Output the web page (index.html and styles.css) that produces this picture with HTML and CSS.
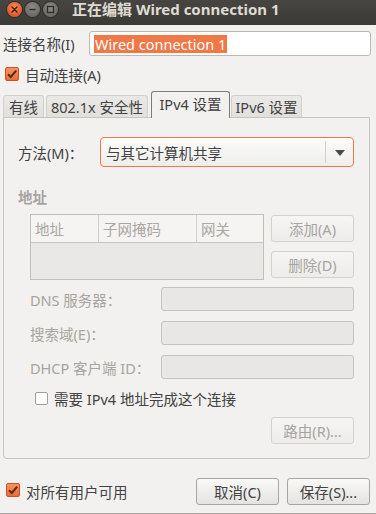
FILE: index.html
```html
<!DOCTYPE html>
<html lang="zh-CN">
<head>
<meta charset="utf-8">
<title>正在编辑 Wired connection 1</title>
<link rel="stylesheet" href="styles.css">
</head>
<body>
<div class="window">
  <div class="titlebar">
    <span class="wbtn close"><svg width="15" height="15" viewBox="0 0 15 15"><path d="M5 5 L10 10 M10 5 L5 10" stroke="#3b1a0c" stroke-width="1.4" stroke-linecap="round"/></svg></span>
    <span class="wbtn gray"><svg width="15" height="15" viewBox="0 0 15 15"><path d="M4.5 7.5 H10.5" stroke="#2e2d2a" stroke-width="1.4"/></svg></span>
    <span class="wbtn gray"><svg width="15" height="15" viewBox="0 0 15 15"><rect x="4.5" y="4.5" width="6" height="6" fill="none" stroke="#2e2d2a" stroke-width="1.3"/></svg></span>
    <span class="title">正在编辑 Wired connection 1</span>
  </div>

  <div class="name-row">
    <span class="name-label">连接名称(I)</span>
    <div class="name-entry"><span class="sel">Wired connection 1</span></div>
  </div>

  <div class="auto-row">
    <span class="cb checked"><svg width="12" height="12" viewBox="0 0 12 12"><path d="M2 6.2 L4.8 9 L10.2 2.6" fill="none" stroke="#5a2a12" stroke-width="2"/></svg></span>
    <span class="cb-text">自动连接(A)</span>
  </div>

  <div class="tabs">
    <div class="tab t1">有线</div>
    <div class="tab t2">802.1x 安全性</div>
    <div class="tab active t3">IPv4 设置</div>
    <div class="tab t4">IPv6 设置</div>
  </div>

  <div class="panel">
    <div class="method-row">
      <span class="method-label">方法(M)：</span>
      <div class="combo">
        <span class="combo-text">与其它计算机共享</span>
        <span class="combo-sep"></span>
        <span class="combo-arrow"></span>
      </div>
    </div>

    <div class="heading">地址</div>

    <div class="addr">
      <div class="table">
        <div class="th c1">地址</div>
        <div class="th c2">子网掩码</div>
        <div class="th c3">网关</div>
        <div class="tbody"></div>
      </div>
      <div class="addr-btns">
        <div class="btn disabled">添加(A)</div>
        <div class="btn disabled">删除(D)</div>
      </div>
    </div>

    <div class="fields">
      <div class="field"><span class="flabel">DNS 服务器：</span><span class="fentry"></span></div>
      <div class="field"><span class="flabel">搜索域(E)：</span><span class="fentry"></span></div>
      <div class="field"><span class="flabel">DHCP 客户端 ID：</span><span class="fentry"></span></div>
    </div>

    <div class="req-row">
      <span class="cb empty"></span>
      <span class="req-text">需要 IPv4 地址完成这个连接</span>
    </div>

    <div class="route-row">
      <div class="btn disabled">路由(R)...</div>
    </div>
  </div>

  <div class="bottom">
    <span class="cb checked"><svg width="12" height="12" viewBox="0 0 12 12"><path d="M2 6.2 L4.8 9 L10.2 2.6" fill="none" stroke="#5a2a12" stroke-width="2"/></svg></span>
    <span class="cb-text">对所有用户可用</span>
    <span class="spacer"></span>
    <div class="btn">取消(C)</div>
    <div class="btn">保存(S)...</div>
  </div>
</div>
</body>
</html>
```

FILE: styles.css
```css
* { box-sizing: border-box; margin: 0; padding: 0; }
html, body { width: 376px; height: 514px; overflow: hidden; }
body {
  background: #f2f1f0;
  font-family: "Noto Sans", "Noto Sans CJK SC", sans-serif;
  font-size: 14.5px;
  color: #424242;
}
.window {
  height: 514px;
  border-bottom: 1px solid #a9a6a1;
  display: flex;
  flex-direction: column;
}

/* title bar */
.titlebar {
  height: 25px;
  background: linear-gradient(#464541, #3b3a36);
  display: flex;
  align-items: center;
  padding: 0 0 6px 7px;
}
.wbtn {
  width: 15px;
  height: 15px;
  border-radius: 50%;
  margin-right: 3px;
  display: flex;
}
.wbtn.close {
  background: radial-gradient(circle at 50% 35%, #f9885a, #e2582a 70%);
  box-shadow: 0 0 0 1px #2f2e2b;
}
.wbtn.gray {
  background: radial-gradient(circle at 50% 35%, #8e8c86, #6c6a65 70%);
  box-shadow: 0 0 0 1px #2f2e2b;
}
.title {
  margin-left: 11px;
  color: #dfdbd2;
  font-weight: bold;
  font-size: 15px;
  line-height: 17px;
}

/* connection name */
.name-row {
  display: flex;
  align-items: center;
  height: 25px;
  margin-top: 6px;
  padding-left: 3px;
}
.name-label { width: 86px; }
.name-entry {
  width: 282px;
  height: 25px;
  background: #ffffff;
  border: 1px solid #bdbab5;
  border-radius: 3px;
  padding-left: 4px;
  display: flex;
  align-items: center;
}
.sel {
  background: #f07746;
  color: #ffffff;
  line-height: 18px;
  padding: 0 1px;
}

/* checkboxes */
.cb {
  width: 14px;
  height: 14px;
  border-radius: 2px;
  display: flex;
  align-items: center;
  justify-content: center;
  flex: none;
}
.cb.checked {
  background: linear-gradient(#f49563, #e96b37);
  border: 1px solid #c4531f;
}
.cb.empty {
  width: 13px;
  height: 13px;
  background: #ffffff;
  border: 1px solid #a19e99;
}
.cb-text { margin-left: 6px; }

.auto-row {
  display: flex;
  align-items: center;
  height: 14px;
  margin-top: 11px;
  padding-left: 5px;
}

/* tabs */
.tabs {
  display: flex;
  align-items: flex-end;
  height: 26px;
  margin-top: 10px;
  padding-left: 3px;
}
.tab {
  height: 22px;
  background: linear-gradient(#ebe9e7, #e2e0dd);
  border: 1px solid #d3d0cb;
  border-bottom: 0;
  border-radius: 3px 3px 0 0;
  display: flex;
  align-items: center;
  justify-content: center;
}
.t1 { width: 41px; }
.t2 { width: 102px; margin-left: 2px; }
.t3 { width: 79px; margin-left: 3px; }
.t4 { width: 71px; margin-left: 1px; }
.tab.active {
  height: 27px;
  margin-bottom: -1px;
  background: #f2f1f0;
  border-color: #7e7c78;
  position: relative;
  z-index: 1;
  padding-bottom: 3px;
}

/* panel */
.panel {
  height: 342px;
  margin: 0 6px 0 3px;
  border: 1px solid #c8c5c0;
  border-radius: 0 0 4px 4px;
  padding: 19px 15px 0 14px;
  display: flex;
  flex-direction: column;
}
.method-row {
  display: flex;
  align-items: center;
  height: 30px;
}
.method-label { width: 82px; }
.combo {
  width: 254px;
  height: 30px;
  border: 1px solid #ea7a48;
  border-radius: 4px;
  background: linear-gradient(#fbfbfa, #efeeec);
  display: flex;
  align-items: center;
  padding-left: 5px;
}
.combo-text { flex: 1; }
.combo-sep {
  width: 1px;
  height: 22px;
  background: #d2cfca;
}
.combo-arrow {
  width: 0;
  height: 0;
  border-left: 5px solid transparent;
  border-right: 5px solid transparent;
  border-top: 6px solid #4a4a4a;
  margin: 2px 8px 0 9px;
}

.heading {
  margin-top: 20px;
  line-height: 20px;
  font-weight: bold;
  color: #a7a39e;
}

.addr {
  display: flex;
  margin-top: 7px;
  padding-left: 12px;
}
.table {
  width: 235px;
  height: 66px;
  border: 1px solid #c2beb9;
  display: grid;
  grid-template-columns: 68px 98px 1fr;
  grid-template-rows: 28px 1fr;
}
.th {
  background: #f5f4f3;
  border-bottom: 1px solid #c8c4bf;
  color: #aaa6a1;
  display: flex;
  align-items: center;
  padding-left: 4px;
}
.c1, .c2 { border-right: 1px solid #d2cfca; }
.tbody {
  grid-column: 1 / 4;
  background: #eae8e6;
}
.addr-btns {
  margin-left: 7px;
  margin-top: 1px;
  display: flex;
  flex-direction: column;
  gap: 9px;
}

.btn {
  width: 83px;
  height: 27px;
  border: 1px solid #a9a6a1;
  border-radius: 3px;
  background: linear-gradient(#f9f9f8, #e4e3e1);
  display: flex;
  align-items: center;
  justify-content: center;
}
.btn.disabled {
  border-color: #d5d2cd;
  background: linear-gradient(#f6f5f4, #edecea);
  color: #a8a49f;
}

.fields {
  margin-top: 7px;
  padding-left: 12px;
  display: flex;
  flex-direction: column;
  gap: 10px;
}
.field {
  display: flex;
  align-items: center;
  height: 24px;
}
.flabel {
  width: 131px;
  color: #a8a49f;
}
.fentry {
  width: 193px;
  height: 24px;
  background: #e8e7e5;
  border: 1px solid #c7c4bf;
  border-radius: 3px;
}

.req-row {
  display: flex;
  align-items: center;
  margin-top: 13px;
  padding-left: 17px;
  height: 13px;
}
.req-text { margin-left: 6px; }

.route-row {
  display: flex;
  justify-content: flex-end;
  margin-top: 12px;
}

/* bottom */
.bottom {
  display: flex;
  align-items: center;
  margin-top: 19px;
  padding: 0 6px;
  height: 27px;
}
.bottom .cb { margin-top: -3px; }
.spacer { flex: 1; }
.bottom .btn + .btn { margin-left: 8px; }
```
